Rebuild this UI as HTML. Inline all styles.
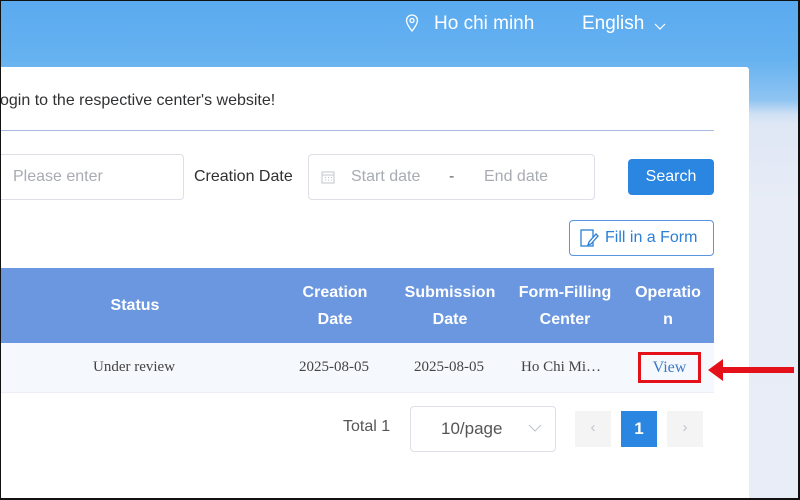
<!DOCTYPE html>
<html><head><meta charset="utf-8"><style>
*{margin:0;padding:0;box-sizing:border-box}
body{width:800px;height:500px;overflow:hidden;position:relative;font-family:"Liberation Sans",sans-serif;
background:linear-gradient(180deg,#5aaaf0 0px,#66b2f0 60px,#8fc4f2 100px,#cfe0f4 114px,#dfe7f5 125px,#e7ecf6 200px,#e9edf7 500px);}
.frame{position:absolute;inset:0;border:1px solid #111;border-right-width:2px;border-bottom-width:2px;pointer-events:none;z-index:10}
.top{position:absolute;top:13px;color:#fff;font-size:19px}
.card{position:absolute;left:0;top:67px;width:749px;height:433px;background:#fff;border-radius:0 3px 0 0}
.abs{position:absolute}
.inp{position:absolute;border:1px solid #dcdfe6;border-radius:4px;background:#fff;color:#a8abb2;font-size:16px}
</style></head><body>
<div class="top" style="left:404px"><svg width="16" height="20" viewBox="0 0 16 20" style="vertical-align:-1px"><path d="M8 18C4 13 2.5 10 2.5 7.5a5.5 5.5 0 0 1 11 0C13.5 10 12 13 8 18z" fill="none" stroke="#fff" stroke-width="1.3"/><circle cx="8" cy="7.5" r="2" fill="none" stroke="#fff" stroke-width="1.3"/></svg></div>
<div class="top" style="left:434px">Ho chi minh</div>
<div class="top" style="left:582px">English</div>
<svg class="abs" style="left:654px;top:21px" width="12" height="10"><path d="M1 3l5 5 5-5" fill="none" stroke="#fff" stroke-width="1.2"/></svg>
<div class="card">
 <div class="abs" style="left:0;top:25px;font-size:16px;color:#303133">ogin to the respective center's website!</div>
 <div class="abs" style="left:0;top:63px;width:714px;height:1px;background:#a9b8de"></div>
 <div class="inp" style="left:-4px;top:87px;width:188px;height:46px;padding:13px 0 0 16px">Please enter</div>
 <div class="abs" style="left:194px;top:101px;font-size:16px;color:#303133">Creation Date</div>
 <div class="inp" style="left:308px;top:87px;width:287px;height:46px">
  <svg class="abs" style="left:12px;top:15px" width="14" height="14"><rect x="1" y="2" width="12" height="11" fill="none" stroke="#c0c4cc"/><path d="M1 5h12M4 7.5h1M7 7.5h1M10 7.5h1M4 10h1M7 10h1M10 10h1" stroke="#c0c4cc"/></svg>
  <span class="abs" style="left:42px;top:13px">Start date</span>
  <span class="abs" style="left:140px;top:13px;color:#606266">-</span>
  <span class="abs" style="left:175px;top:13px">End date</span>
 </div>
 <div class="abs" style="left:628px;top:92px;width:86px;height:36px;background:#2a86e0;border-radius:4px;color:#fff;font-size:16px;text-align:center;line-height:36px">Search</div>
 <div class="abs" style="left:569px;top:153px;width:145px;height:36px;border:1px solid #5a95e0;border-radius:4px;color:#2a7fd6;font-size:16px;line-height:34px;padding-left:35px">Fill in a Form</div>
 <svg class="abs" style="left:580px;top:162px" width="20" height="20"><rect x="1" y="1" width="12" height="16" fill="none" stroke="#2a7fd6" stroke-width="1.3"/><path d="M8 16l1-3 7-8 2 2-7 8z" fill="#fff" stroke="#2a7fd6" stroke-width="1.3"/></svg>
 <div class="abs" style="left:0;top:201px;width:714px;height:75px;background:#6b97e0;color:#fff;font-size:16px;font-weight:bold;text-align:center;line-height:27px">
  <div class="abs" style="left:100px;top:24px;width:70px">Status</div>
  <div class="abs" style="left:295px;top:11px;width:80px">Creation<br>Date</div>
  <div class="abs" style="left:400px;top:11px;width:100px">Submission<br>Date</div>
  <div class="abs" style="left:512px;top:11px;width:106px">Form-Filling<br>Center</div>
  <div class="abs" style="left:630px;top:11px;width:76px">Operatio<br>n</div>
 </div>
 <div class="abs" style="left:0;top:276px;width:714px;height:50px;background:#f5f8fd;border-bottom:1px solid #ebeef5;font-family:'Liberation Serif',serif;font-size:15px;color:#444">
  <span class="abs" style="left:93px;top:16px">Under review</span>
  <span class="abs" style="left:299px;top:16px">2025-08-05</span>
  <span class="abs" style="left:414px;top:16px">2025-08-05</span>
  <span class="abs" style="left:521px;top:16px">Ho Chi Mi…</span>
  <div class="abs" style="left:638px;top:9px;width:63px;height:31px;border:3px solid #e5111a;color:#3b78c8;font-size:16px;text-align:center;line-height:25px">View</div>
 </div>
 <div class="abs" style="left:343px;top:351px;font-size:16px;color:#555">Total 1</div>
 <div class="inp" style="left:410px;top:339px;width:146px;height:46px;color:#555;padding:12px 0 0 30px;font-size:17px">10/page</div>
 <svg class="abs" style="left:528px;top:356px" width="14" height="10"><path d="M1 2l6 6 6-6" fill="none" stroke="#c0c4cc" stroke-width="1.1"/></svg>
 <div class="abs" style="left:575px;top:344px;width:36px;height:36px;background:#f4f4f5;color:#c0c4cc;text-align:center;line-height:34px;font-size:15px">‹</div>
 <div class="abs" style="left:621px;top:344px;width:36px;height:36px;background:#2a86e0;color:#fff;text-align:center;line-height:36px;font-size:17px;font-weight:bold">1</div>
 <div class="abs" style="left:667px;top:344px;width:36px;height:36px;background:#f4f4f5;color:#c0c4cc;text-align:center;line-height:34px;font-size:15px">›</div>
</div>
<svg class="abs" style="left:706px;top:356px" width="90" height="28"><path d="M2 14L17 3v8h71v6H17v8z" fill="#e5111a"/></svg>
<div class="frame"></div>
</body></html>
